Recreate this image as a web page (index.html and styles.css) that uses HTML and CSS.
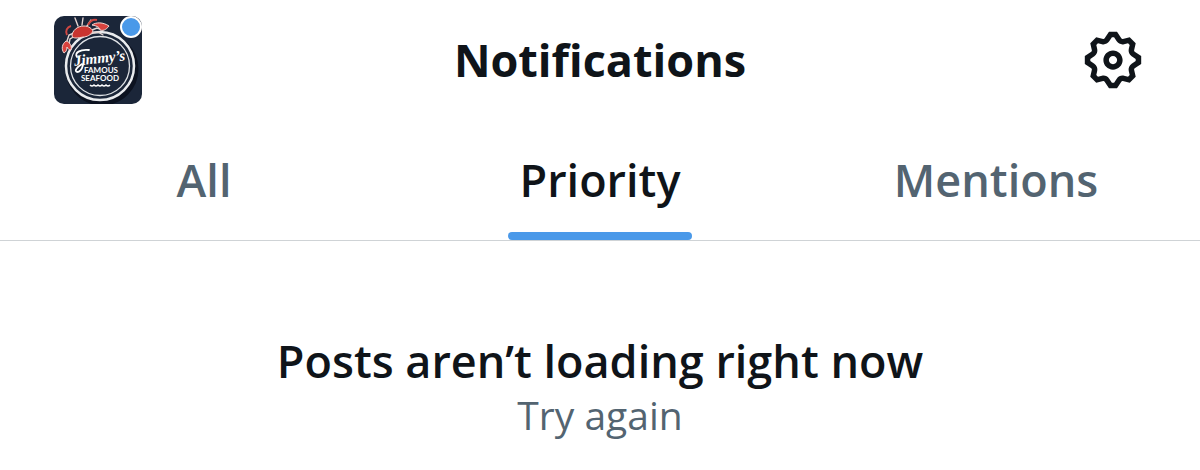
FILE: index.html
```html
<!DOCTYPE html>
<html lang="en">
<head>
    <meta charset="UTF-8">
    <meta name="viewport" content="width=device-width, initial-scale=1.0">
    <title>Notifications</title>
    <link rel="stylesheet" href="styles.css">
</head>
<body>

<header class="top-bar">
    <button class="avatar" aria-label="Account menu">
        <svg viewBox="0 0 88 88" aria-hidden="true">
            <rect width="88" height="88" fill="#1b2639"/>
            <!-- plate -->
            <circle cx="48" cy="53" r="34" fill="none" stroke="#0c1220" stroke-width="5"/>
            <circle cx="46" cy="50" r="34" fill="#1b2639" stroke="#e9ebee" stroke-width="2.5"/>
            <circle cx="46" cy="50" r="29.5" fill="none" stroke="#dfe2e6" stroke-width="1.3"/>
            <!-- crab -->
            <g fill="none" stroke="#e5d5d2" stroke-width="1.4" stroke-linecap="round">
                <path d="M20 17l-5 2-2 6M21 20l-5 3-1 5M38 14l5-2 6 2M37 17l7-1 5 3M24 10l-3-8M28 9l1-7M33 10l4-6"/>
            </g>
            <path d="M18 20c0-5 5-10 12-10 5 0 8 3 9 5-2 4-6 6-10 6-5 1-10 2-11-1z" fill="#c9342f" stroke="#f0d6d2" stroke-width="1"/>
            <path d="M13 19c-2-4 0-8 4-9M34 9c2-4 5-6 9-5" fill="none" stroke="#cf4742" stroke-width="2"/>
            <path d="M12 25c-4 3-5 8-2 12 2-1 3-3 3-6 1 2 2 3 4 3 1-4-1-8-5-9zM38 9c4-3 11-3 17 1-3 4-6 5-9 4 0-2-2-4-8-5z" fill="#d8433f" stroke="#f0d6d2" stroke-width="1"/>
            <!-- name -->
            <path d="M23 41c-3-4 3-8 12-7M28 48c-5 3-8 7-5 8 3 0 5-3 6-7" fill="none" stroke="#fff" stroke-width="1.8" stroke-linecap="round"/>
            <text class="logo-script" x="46" y="47" transform="rotate(-6 46 47)">Jimmy’s</text>
            <text class="logo-caps" x="47" y="57">FAMOUS</text>
            <text class="logo-caps" x="46" y="65">SEAFOOD</text>
            <path d="M36 69q2 2 4 0q2 2 4 0q2 2 4 0q2 2 4 0q2 2 4 0" fill="none" stroke="#fff" stroke-width="1.5"/>
        </svg>
        <span class="unread-dot"></span>
    </button>
    <h1>Notifications</h1>
    <button class="settings" aria-label="Settings">
        <svg viewBox="0 0 24 24" aria-hidden="true">
            <path fill="#0f1419" d="M10.54 1.75h2.92l1.57 2.36c.11.17.32.25.53.21l2.53-.59 2.17 2.17-.58 2.54c-.05.2.04.41.21.53l2.36 1.57v2.92l-2.36 1.57c-.17.12-.26.33-.21.53l.58 2.54-2.17 2.17-2.53-.59c-.21-.04-.42.04-.53.21l-1.57 2.36h-2.92l-1.58-2.36c-.11-.17-.32-.25-.52-.21l-2.54.59-2.17-2.17.58-2.54c.05-.2-.03-.41-.21-.53l-2.35-1.57v-2.92L4.1 8.97c.18-.12.26-.33.21-.53L3.73 5.9 5.9 3.73l2.54.59c.2.04.41-.04.52-.21l1.58-2.36zm1.07 2l-.98 1.47C10.05 6.08 9 6.5 7.99 6.27l-1.46-.34-.6.6.33 1.46c.24 1.01-.18 2.07-1.05 2.64l-1.46.98v.78l1.46.98c.87.57 1.29 1.63 1.05 2.64l-.33 1.46.6.6 1.46-.34c1.01-.23 2.06.19 2.64 1.05l.98 1.47h.78l.97-1.47c.58-.86 1.63-1.28 2.65-1.05l1.45.34.61-.6-.34-1.46c-.23-1.01.18-2.07 1.05-2.64l1.47-.98v-.78l-1.47-.98c-.87-.57-1.28-1.63-1.05-2.64l.34-1.46-.61-.6-1.45.34c-1.02.23-2.07-.19-2.65-1.05l-.97-1.47h-.78zM12 10.5c-.83 0-1.5.67-1.5 1.5s.67 1.5 1.5 1.5 1.5-.67 1.5-1.5-.67-1.5-1.5-1.5zM8.5 12c0-1.93 1.57-3.5 3.5-3.5s3.5 1.57 3.5 3.5-1.57 3.5-3.5 3.5-3.5-1.57-3.5-3.5z"/>
        </svg>
    </button>
</header>

<nav class="tabs">
    <a href="#all">All</a>
    <a href="#priority" class="active" aria-current="page">Priority</a>
    <a href="#mentions">Mentions</a>
</nav>

<main class="empty-state">
    <h2>Posts aren’t loading right now</h2>
    <button class="retry">Try again</button>
</main>

</body>
</html>
```
FILE: styles.css
```css
* {
    box-sizing: border-box;
}

body {
    margin: 0;
    font-family: "Open Sans", sans-serif;
    background-color: #fff;
    color: #0f1419;
}

h1, h2 {
    margin: 0;
}

button {
    padding: 0;
    border: none;
    background: none;
    font-family: inherit;
    cursor: pointer;
}

svg {
    display: block;
    width: 100%;
}

.top-bar {
    display: grid;
    grid-template-columns: 1fr auto 1fr;
    align-items: center;
    height: 120px;
    padding: 0 54px;
}

.top-bar h1 {
    font-size: 45px;
    font-weight: 700;
    line-height: 60px;
}

.avatar {
    position: relative;
    width: 88px;
}

.avatar svg {
    border-radius: 10px;
}

.unread-dot {
    position: absolute;
    top: 0;
    right: 0;
    width: 22px;
    height: 22px;
    border: 2px solid #fff;
    border-radius: 50%;
    background-color: #4a99e9;
}

.logo-script {
    fill: #fff;
    font: italic bold 15px "Liberation Serif", serif;
    text-anchor: middle;
}

.logo-caps {
    fill: #fff;
    font: bold 8px Lato, sans-serif;
    text-anchor: middle;
}

.settings {
    justify-self: end;
    width: 66px;
}

.tabs {
    display: grid;
    grid-template-columns: repeat(3, 1fr);
    justify-items: center;
    padding: 0 6px;
    border-bottom: 1px solid #cfd3d6;
}

.tabs a {
    height: 120px;
    padding: 30px 12px 0;
    color: #536471;
    font-size: 45px;
    font-weight: 600;
    line-height: 60px;
    text-decoration: none;
}

.tabs .active {
    position: relative;
    color: #0f1419;
}

.tabs .active::after {
    content: "";
    position: absolute;
    right: 0;
    bottom: 0;
    left: 0;
    height: 8px;
    border-radius: 4px;
    background-color: #4a99e9;
}

.empty-state {
    display: flex;
    flex-direction: column;
    align-items: center;
    padding: 92px 24px 24px;
}

.empty-state h2 {
    font-size: 45px;
    font-weight: 600;
    line-height: 56px;
    text-align: center;
}

.retry {
    color: #536471;
    font-size: 39px;
    line-height: 52px;
}
```
